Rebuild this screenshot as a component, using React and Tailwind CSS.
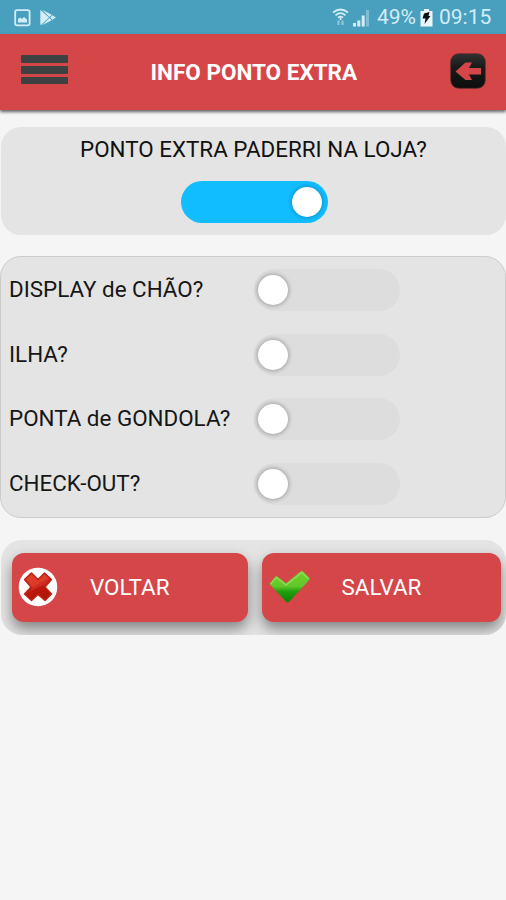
import React from "react";

function StatusBar() {
  return (
    <div className="flex h-[34px] items-center bg-[#489fbe] pt-px pl-[14px] pr-[14px] text-[#d3edf7]">
      <svg width="17" height="18" viewBox="0 0 17 18" fill="none">
        <rect x="1.2" y="1.2" width="14.4" height="15.2" rx="1.8" stroke="currentColor" strokeWidth="1.8" />
        <path d="M4 13.500v-3.500l2-1.500 2 1.500 2-2 3 2.500v3z" fill="currentColor" />
      </svg>
      <svg className="ml-[9px]" width="17" height="17" viewBox="0 0 17 17">
        <path d="M.5 1 9 8.500 1 16Q.3 16 .3 15V2z" fill="currentColor" />
        <path d="M2 .8 11.800 5.800 9.500 8zM2 16.200l9.800-5-2.300-2.200zM12.500 6.200 16 8.500l-3.500 2.300-2.200-2.300z" fill="currentColor" />
      </svg>
      <div className="ml-auto flex items-center">
        <svg width="17" height="19" viewBox="0 0 17 19" fill="none" stroke="currentColor" strokeWidth="1.700">
          <path d="M1 4.500Q8.500-1.500 16 4.500M3.500 7.300Q8.500 3 13.500 7.300M6 9.700Q8.500 7.700 11 9.700" />
          <path d="M8.500 12V9.500" />
          <path d="M6.500 12.500V17M10.500 12.500V17" strokeWidth="2" opacity=".55" />
        </svg>
        <svg className="ml-[4px]" width="17" height="18" viewBox="0 0 17 18" fill="currentColor">
          <path d="M0 14h3v3.500H0zM4.300 11.500h3v6h-3zM8.700 6.500h3v11h-3z" />
          <path d="M13 1h3v16.500h-3z" opacity=".4" />
        </svg>
        <span className="ml-[7px] w-[39px] whitespace-nowrap text-[21px] leading-none">49%</span>
        <svg className="ml-[4px]" width="13" height="18" viewBox="0 0 13 18">
          <path d="M4 0h5v2h3.500v15.500H.5V2H4z" fill="#e9f6fb" />
          <path d="M4 4.500 9.500 3 8.500 7h2L4.500 15l1-5.500H2.500z" fill="#0a1215" />
        </svg>
        <span className="ml-[6px] w-[53px] whitespace-nowrap text-[21px] leading-none">09:15</span>
      </div>
    </div>
  );
}

function Header() {
  return (
    <header className="flex h-[76px] items-center bg-[#d54649] pr-[20px] pl-[21px] shadow-[0_2px_3px_rgba(0,0,0,0.6)]">
      <div className="flex w-[47px] flex-col gap-[3px] pb-[5px]">
        <div className="h-[8px] rounded-[1px] bg-[#3d4141]" />
        <div className="h-[8px] rounded-[1px] bg-[#3d4141]" />
        <div className="h-[7px] rounded-[1px] bg-[#3d4141]" />
      </div>
      <h1 className="ml-[82.5px] whitespace-nowrap text-[22.500px] font-bold leading-none text-white">INFO PONTO EXTRA</h1>
      <svg className="ml-auto mb-[2px]" width="36" height="36" viewBox="0 0 36 36">
        <defs>
          <linearGradient id="key" x2="0" y2="1">
            <stop stopColor="#333131" />
            <stop offset=".4" stopColor="#171a19" />
            <stop offset="1" stopColor="#0c0e0d" />
          </linearGradient>
        </defs>
        <rect x=".7" y=".7" width="34.600" height="34.600" rx="8" fill="url(#key)" stroke="#572b29" strokeWidth=".7" />
        <path d="M5.500 18.500 15.500 9.500h6.500l-3 5.500h12v6.500H19l3 5.500h-6.500z" fill="#d54649" />
      </svg>
    </header>
  );
}

function Toggle({ on }) {
  return (
    <div
      className={
        on
          ? "flex h-[42px] w-[147px] items-center justify-end rounded-full bg-[#11bcff] px-[6px]"
          : "flex h-[42px] w-[146px] items-center rounded-full bg-[#dddddd] px-[4px]"
      }
    >
      <div
        className={
          on
            ? "size-[30px] rounded-full bg-white shadow-[0_0_4px_rgba(0,0,0,0.35)]"
            : "size-[30px] rounded-full bg-white shadow-[0_0_4px_1px_rgba(0,0,0,0.28)]"
        }
      />
    </div>
  );
}

function Option({ label }) {
  return (
    <div className="grid h-[64.6px] grid-cols-[245px_1fr] items-center">
      <span className="whitespace-nowrap pb-[2px] text-[22.400px] leading-none text-[#161616]">{label}</span>
      <Toggle />
    </div>
  );
}

function CancelIcon() {
  return (
    <svg className="mb-px" width="40" height="40" viewBox="0 0 40 40">
      <defs>
        <linearGradient id="cross" x2=".5" y2="1">
          <stop stopColor="#dc3522" />
          <stop offset=".5" stopColor="#d62c1b" />
          <stop offset=".54" stopColor="#c01a0e" />
          <stop offset="1" stopColor="#b01408" />
        </linearGradient>
      </defs>
      <circle cx="20" cy="20" r="19.300" fill="#fff" />
      <path
        d="M13.500 6 20 12.500 26.500 6 33.500 12.500 27 20 33.500 27 27 33.500 20 27.500 13.500 33.500 6.500 27 13 20 6.500 12.500z"
        fill="url(#cross)"
        stroke="#c02317"
        strokeWidth="1.500"
        strokeLinejoin="round"
      />
      <path d="M13.500 7.500 20 14 26.500 7.500 32 12.500 26.500 18.500Q20 19 12 25l2.500-5L8.500 12.500z" fill="#f2614a" opacity=".28" />
    </svg>
  );
}

function CheckIcon() {
  return (
    <svg className="mb-px" width="42" height="34" viewBox="0 0 42 34">
      <defs>
        <linearGradient id="check" x2="0" y2="1">
          <stop stopColor="#6fd02f" />
          <stop offset=".48" stopColor="#62c82b" />
          <stop offset=".65" stopColor="#219f0c" />
          <stop offset="1" stopColor="#078200" />
        </linearGradient>
      </defs>
      <path
        d="M.5 14 6.500 6.500q1-.7 2 .3l8.500 6.500L31.500 1.500q1.300-1 2.500 0L40.500 8q.7 1-.3 2L20 31.800q-1.500 1.400-3 0z"
        fill="url(#check)"
      />
      <path d="M1.500 14 7.500 7.500 17 15 33 2.500l6 6" fill="none" stroke="#a5eb68" strokeWidth="1.400" opacity=".6" />
    </svg>
  );
}

function ActionButton({ icon, children, className }) {
  return (
    <button
      className={
        "flex h-[69px] items-center rounded-[12px] bg-[#d54649] text-[22.400px] leading-none text-white shadow-[0_7px_14px_rgba(0,0,0,0.42)] " +
        className
      }
    >
      {icon}
      {children}
    </button>
  );
}

export default function App() {
  return (
    <div className="h-[900px] w-[506px] overflow-hidden bg-[#f5f5f5] font-[Roboto,sans-serif]">
      <StatusBar />
      <Header />
      <main className="pt-[17px]">
        <section className="ml-px flex h-[108px] flex-col items-center rounded-[20px] bg-[#e4e4e4] pt-[11px]">
          <p className="whitespace-nowrap text-[22.400px] leading-[22px] text-[#111]">PONTO EXTRA PADERRI NA LOJA?</p>
          <div className="mt-[21px] ml-[2px]">
            <Toggle on />
          </div>
        </section>
        <section className="mt-[21px] h-[262px] rounded-[21px] border-[1.500px] border-[#cccccc] bg-[#e4e4e4] pt-px pl-[8px]">
          <Option label="DISPLAY de CHÃO?" />
          <Option label="ILHA?" />
          <Option label="PONTA de GONDOLA?" />
          <Option label="CHECK-OUT?" />
        </section>
        <section className="mt-[22px] ml-px flex h-[95px] gap-[14px] overflow-hidden rounded-[21px] bg-[#e4e4e4] pt-[13px] pl-[11px]">
          <ActionButton className="w-[236px] pl-[6px]" icon={<CancelIcon />}>
            <span className="ml-[32px]">VOLTAR</span>
          </ActionButton>
          <ActionButton className="w-[239px] pl-[7px]" icon={<CheckIcon />}>
            <span className="ml-[30.5px]">SALVAR</span>
          </ActionButton>
        </section>
      </main>
    </div>
  );
}
